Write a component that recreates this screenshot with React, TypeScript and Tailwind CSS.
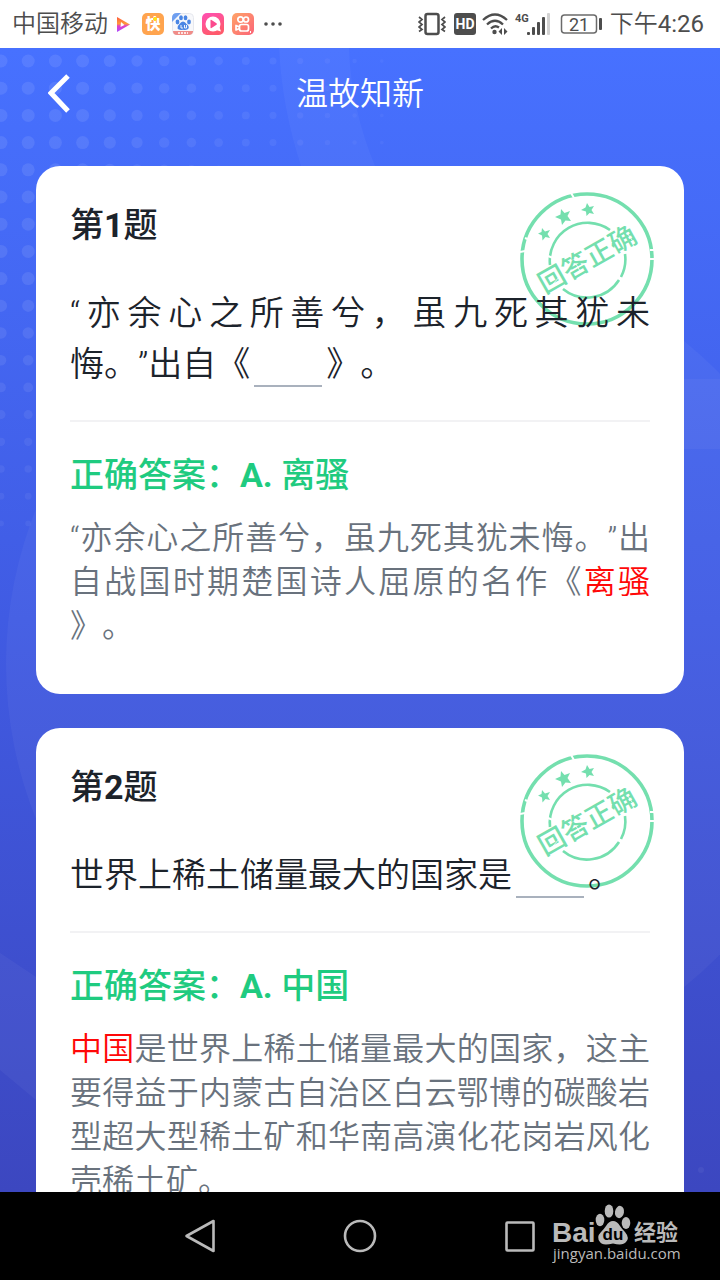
import React from "react";

interface Question {
    id: number;
    question: React.ReactNode;
    answer: string;
    explanation: React.ReactNode;
}

const Blank = () => <span className="inline-block w-17 h-10 mx-1 border-b-2 border-[#a9b1bd] align-middle" />;

const Mark = ({ children }: { children: React.ReactNode }) => <span className="text-[#ff0808]">{children}</span>;

const QUESTIONS: Question[] = [
    {
        id: 1,
        question: (
            <>
                “亦余心之所善兮，虽九死其犹未
                <wbr />
                <span className="whitespace-nowrap">悔。”出自《</span>
                <Blank />
                》。
            </>
        ),
        answer: "A. 离骚",
        explanation: (
            <>
                “亦余心之所善兮，虽九死其犹未悔。”出自战国时期楚国诗人屈原的名作《<Mark>离骚</Mark>
                <wbr />
                》。
            </>
        ),
    },
    {
        id: 2,
        question: (
            <>
                世界上稀土储量最大的国家是
                <Blank />
                。
            </>
        ),
        answer: "A. 中国",
        explanation: (
            <>
                <Mark>中国</Mark>是世界上稀土储量最大的国家，这主要得益于内蒙古自治区白云鄂博的碳酸岩型超大型稀土矿和华南高演化花岗岩风化壳稀土矿。
            </>
        ),
    },
];

// Halftone dots that shrink and fade away from the top left corner
const DOTS = Array.from({ length: 18 }, (_, row) =>
    Array.from({ length: 15 }, (_, col) => {
        const fade = Math.max(0, 1 - Math.max(0, col - 3) / 13 - Math.max(0, row - 8) / 14);
        return { x: 1 + col * 27.2, y: 13 + row * 27.2, r: 1 + 5.5 * fade, o: 0.03 + 0.06 * fade };
    })
)
    .flat()
    .filter((d) => d.r > 1);

function Backdrop() {
    return (
        <svg
            className="absolute inset-0 w-full h-full pointer-events-none"
            viewBox="0 0 720 1144"
            preserveAspectRatio="xMidYMin slice"
            aria-hidden="true"
        >
            {DOTS.map((d, i) => (
                <circle key={i} cx={d.x} cy={d.y} r={d.r} fill="#fff" opacity={d.o} />
            ))}
            <g fill="#fff">
                <path d="M279 0 Q282 60 301 118 L375 118 Q351 60 349 0 Z" opacity="0.035" />
                <circle cx="422" cy="616" r="416" opacity="0.04" />
                <path d="M600 331 H720 V401 H600 Z" opacity="0.04" />
                <path d="M0 905 L36 929 L120 970 V1100 L36 1052 L0 1022 Z" opacity="0.04" />
                <circle cx="701" cy="1122" r="3" opacity="0.05" />
            </g>
        </svg>
    );
}

function Stamp() {
    return (
        <svg className="absolute top-6.5 right-7.5 size-[134px]" viewBox="0 0 134 134" role="img" aria-label="回答正确">
            <g fill="none" stroke="#74dfae">
                <circle cx="67" cy="67" r="65" strokeWidth="3.6" />
                <path d="M30 73 A38 38 0 0 1 90 38" strokeWidth="2.6" />
                <path d="M43 97 A38 38 0 0 0 99 88 M101 85 A38 38 0 0 0 105 62" strokeWidth="2.6" />
            </g>
            <g stroke="#fff" strokeWidth="2">
                <path d="M51 1 L54 6 M5 46 L10 48 M0 60 L5 59 M130 58 L134 58 M130 67 L134 67 M28 64 L33 66" />
            </g>
            <g fill="#74dfae">
                <path d="M41 17 L44.500 21 L50 19 L47.500 24 L51 29 L45.500 28.500 L42 33 L41 27.500 L35 25 L40.500 22.500 Z" />
                <path d="M67 11 L69.500 15 L74 14 L71.500 18 L74 22 L69.500 21 L66.500 24 L66 19.500 L61 18 L65.500 15.500 Z" />
                <path d="M22 36 L25 39.500 L30 38 L27.500 42 L30 46 L25.500 45 L22.500 48.500 L22 43.500 L18 41.500 L21.500 40 Z" />
                <text
                    x="67"
                    y="77"
                    textAnchor="middle"
                    transform="rotate(-29.500 67 67)"
                    fontSize="27"
                    fontWeight="500"
                    fontFamily="'Noto Sans CJK SC', sans-serif"
                >
                    回答正确
                </text>
            </g>
            <path d="M33 92 L40 84 M56 72 L60 79 M88 55 L92 50 M108 42 L112 48" stroke="#fff" strokeWidth="0.8" />
        </svg>
    );
}

function QuestionCard({ item }: { item: Question }) {
    return (
        <article className="relative bg-white rounded-3xl px-8.5 pt-8.5 pb-11.5">
            <Stamp />
            <div className="relative">
                <h2 className="text-[34px] leading-[50px] font-medium text-[#1c232b]">
                    第<b className="font-bold">{item.id}</b>题
                </h2>
                <p className="mt-9.5 text-[34px] leading-[51px] font-[350] text-justify text-[#1c232b]">{item.question}</p>
                <hr className="mt-7.5 border-t-2 border-[#f2f2f4]" />
                <p className="mt-7 text-[34px] leading-[50px] font-medium text-[#1fcb80]">
                    正确答案：<b className="font-bold">{item.answer.slice(0, 2)}</b>
                    {item.answer.slice(2)}
                </p>
                <p className="mt-4 text-[32px] leading-[44px] font-[350] text-justify text-[#69727d]">{item.explanation}</p>
            </div>
        </article>
    );
}

function StatusBar() {
    return (
        <header className="h-12 shrink-0 bg-white text-[#4d4d4d] text-[24px] flex items-center justify-between pl-3 pr-4">
            <div className="flex items-center gap-2">
                <span className="-mr-1 font-[350]">中国移动</span>
                <svg className="size-5.5" viewBox="0 0 22 22">
                    <defs>
                        <linearGradient id="play" x1="0" y1="0" x2="0" y2="1">
                            <stop offset="0" stopColor="#ff5a3c" />
                            <stop offset="0.45" stopColor="#ff9c3a" />
                            <stop offset="0.6" stopColor="#e040c8" />
                            <stop offset="1" stopColor="#a94bff" />
                        </linearGradient>
                    </defs>
                    <path d="M5 4 L18 11.500 L5 19 Z" fill="url(#play)" />
                    <path d="M9 9 L12.500 12 L8.500 14 Z" fill="#fff" />
                </svg>
                <svg className="size-5.5" viewBox="0 0 22 22">
                    <rect width="22" height="22" rx="5" fill="#ffa44e" />
                    <text x="11" y="16" textAnchor="middle" fontSize="15" fontWeight="900" fill="#fff" fontFamily="'Noto Sans CJK SC', sans-serif">
                        快
                    </text>
                    <path d="M13 4 V8 M11 6 H15" stroke="#ffe21a" strokeWidth="2" />
                </svg>
                <svg className="size-5.5" viewBox="0 0 22 22">
                    <rect x="0.5" y="0.5" width="21" height="21" rx="4" fill="#f7f8fb" stroke="#e6e8ee" />
                    <path d="M0 9 V5 Q0 0 5 0 H9 Z" fill="#6f9ff0" />
                    <g fill="#4a86e4">
                        <ellipse cx="5.500" cy="9" rx="1.900" ry="2.400" />
                        <ellipse cx="9" cy="4.800" rx="1.900" ry="2.500" />
                        <ellipse cx="13.500" cy="4.800" rx="1.900" ry="2.500" />
                        <ellipse cx="17" cy="9" rx="1.900" ry="2.400" />
                        <path d="M11 8.500 Q13 8.500 14.500 11 Q17.500 13 16.500 15.500 Q15.500 17.500 11 16.800 Q6.500 17.500 5.500 15.500 Q5 13 7.500 11 Q9 8.500 11 8.500 Z" />
                    </g>
                    <path d="M9 12 V15 H11 M12.500 12 V15 H14.500 V12" stroke="#fff" fill="none" strokeWidth="0.9" />
                    <path d="M1 18 H21 V19 Q20 22 17 22 H5 Q1 22 1 18 Z" fill="#f08c88" />
                    <path d="M6 20 H16" stroke="#fff" strokeWidth="1.500" strokeDasharray="2 1" />
                </svg>
                <svg className="size-5.5" viewBox="0 0 22 22">
                    <defs>
                        <linearGradient id="pink" x1="0" y1="0" x2="0.4" y2="1">
                            <stop offset="0" stopColor="#ff4fb4" />
                            <stop offset="1" stopColor="#ff5a6c" />
                        </linearGradient>
                    </defs>
                    <rect width="22" height="22" rx="5" fill="url(#pink)" />
                    <circle cx="11" cy="11" r="7.500" fill="#fff" />
                    <path d="M14 17 L19 18.500 L17 13 Z" fill="#fff" />
                    <path d="M8.500 7.500 Q8.500 6.500 9.500 7 L14.500 10.200 Q15.300 11 14.500 11.800 L9.500 15 Q8.500 15.500 8.500 14.500 Z" fill="#fb4a8d" />
                </svg>
                <svg className="size-5.5" viewBox="0 0 22 22">
                    <defs>
                        <linearGradient id="kuai" x1="0" y1="0" x2="1" y2="1">
                            <stop offset="0" stopColor="#ffa468" />
                            <stop offset="1" stopColor="#fb6478" />
                        </linearGradient>
                    </defs>
                    <rect width="22" height="22" rx="5" fill="url(#kuai)" />
                    <g fill="none" stroke="#fff" strokeWidth="1.700">
                        <circle cx="8.500" cy="6.500" r="2.700" />
                        <circle cx="14" cy="6.500" r="2.500" />
                        <rect x="7.500" y="11.500" width="9" height="6.500" rx="2" />
                        <path d="M7.500 14 L4 12.500 V17 L7.500 15.500" strokeLinejoin="round" />
                    </g>
                    <path d="M18.500 18 V20" stroke="#fff" />
                </svg>
                <svg className="w-7 h-5.5" viewBox="0 0 28 22" fill="#4d4d4d">
                    <circle cx="4" cy="11" r="1.800" />
                    <circle cx="11" cy="11" r="1.800" />
                    <circle cx="18" cy="11" r="1.800" />
                </svg>
            </div>
            <div className="flex items-center gap-1.5">
                <svg className="w-7 h-6 mr-0.5" viewBox="0 0 28 24" fill="none" stroke="#4d4d4d">
                    <rect x="7.500" y="2" width="13" height="20" rx="2" strokeWidth="2.500" />
                    <path d="M1 5 L4 7.500 L1 10 L4 12.500 L1 15 L4 17.500 L1 19.500 M27 5 L24 7.500 L27 10 L24 12.500 L27 15 L24 17.500 L27 19.500" strokeWidth="1.700" />
                </svg>
                <svg className="size-5.5" viewBox="0 0 22 22">
                    <rect width="22" height="22" rx="3" fill="#4d4d4d" />
                    <text x="11" y="16" textAnchor="middle" fontSize="14" fontWeight="700" fill="#fff" fontFamily="Roboto, sans-serif">
                        HD
                    </text>
                </svg>
                <svg className="w-6.5 h-6" viewBox="0 0 26 24" fill="none" stroke="#4d4d4d">
                    <path d="M1 8 Q13 -3 25 8 M5 12.500 Q13 5 21 12.500 M9 16.500 Q13 12.500 17 15.500" strokeWidth="2.300" />
                    <circle cx="12.500" cy="20" r="2.200" fill="#4d4d4d" stroke="none" />
                    <path d="M20 16 V23 L16.500 19.500 Z M22 16 V23 L25.500 19.500 Z" fill="#4d4d4d" stroke="none" />
                </svg>
                <svg className="w-9 h-6" viewBox="0 0 36 24" fill="#4d4d4d">
                    <text x="1" y="10" fontSize="11" fontWeight="700" fontFamily="Roboto, sans-serif">
                        4G
                    </text>
                    <rect x="13" y="20" width="3" height="3" rx="1" />
                    <rect x="18" y="15" width="3" height="8" rx="1" />
                    <rect x="23" y="10" width="3" height="13" rx="1" />
                    <rect x="28" y="5" width="3" height="18" rx="1" />
                    <rect x="33" y="1" width="3" height="22" rx="1" fill="#d2d2d2" />
                </svg>
                <svg className="w-11 h-5 ml-1" viewBox="0 0 44 20">
                    <rect x="1.500" y="1" width="35" height="18" rx="3" fill="none" stroke="#6b6b6b" strokeWidth="1.500" />
                    <rect x="39" y="4" width="3" height="12" rx="1" fill="#4d4d4d" />
                    <text x="19" y="16.500" textAnchor="middle" fontSize="18" fill="#4d4d4d" fontFamily="Roboto, sans-serif">
                        21
                    </text>
                </svg>
                <time className="font-[350]">
                    下午<span className="font-normal">4:26</span>
                </time>
            </div>
        </header>
    );
}

function Watermark() {
    return (
        <svg className="absolute right-9.5 top-2.5 w-[130px] h-16" viewBox="0 0 130 64" fill="#bababa" role="img" aria-label="Baidu 经验">
            <text x="0" y="40" fontSize="28" fontWeight="700" fontFamily="'Liberation Sans', sans-serif">
                Bai
            </text>
            <ellipse cx="48" cy="18" rx="4.300" ry="6.200" />
            <ellipse cx="57" cy="9" rx="4.300" ry="6.600" />
            <ellipse cx="67.500" cy="10" rx="4.500" ry="6.200" transform="rotate(10 67.500 10)" />
            <ellipse cx="74" cy="21" rx="4.300" ry="6" />
            <path d="M61 19 Q65 19 68 24 Q70 27 73 30 Q78 36 74 40 Q71 44 61 41.500 Q50 44 48 40 Q44 35 49 30 Q52 27 54 24 Q57 19 61 19 Z" />
            <text x="61" y="38" textAnchor="middle" fontSize="17" fontWeight="700" fill="#000" fontFamily="'Liberation Sans', sans-serif">
                du
            </text>
            <text x="82" y="38" fontSize="22" fontWeight="700" fontFamily="'Noto Sans CJK SC', sans-serif">
                经验
            </text>
            <text x="1" y="57" fontSize="15" fontFamily="'Open Sans', sans-serif">
                jingyan.baidu.com
            </text>
        </svg>
    );
}

function SystemNav() {
    return (
        <nav className="relative h-22 shrink-0 bg-black flex justify-center">
            <button className="w-2/9 flex items-center justify-center" aria-label="返回">
                <svg className="size-9" viewBox="0 0 36 36" fill="none" stroke="#bababa" strokeWidth="2.600" strokeLinejoin="round">
                    <path d="M31.500 3 V33 L4.500 18 Z" />
                </svg>
            </button>
            <button className="w-2/9 flex items-center justify-center" aria-label="主页">
                <svg className="size-9" viewBox="0 0 36 36" fill="none" stroke="#bababa" strokeWidth="2.600">
                    <circle cx="18" cy="18" r="15" />
                </svg>
            </button>
            <button className="w-2/9 flex items-center justify-center" aria-label="最近任务">
                <svg className="size-9" viewBox="0 0 36 36" fill="none" stroke="#bababa" strokeWidth="2.600">
                    <rect x="4.500" y="4.500" width="27" height="28" rx="1" />
                </svg>
            </button>
            <Watermark />
        </nav>
    );
}

export default function App() {
    return (
        <div
            className="h-screen flex flex-col font-[Roboto,'Noto_Sans_CJK_SC',sans-serif] [text-spacing-trim:space-all]"
            lang="zh-CN"
        >
            <StatusBar />
            <main className="relative flex-1 min-h-0 overflow-y-auto [scrollbar-width:none] bg-linear-to-b from-[#4771ff] via-[#405be3] to-[#3c47c0]">
                <Backdrop />
                <div className="relative">
                    <div className="grid grid-cols-[72px_1fr_72px] items-center h-29.5 pb-6.5">
                        <button className="h-12 flex items-center justify-end" aria-label="返回">
                            <svg className="w-6 h-10" viewBox="0 0 24 40" fill="none" stroke="#fff" strokeWidth="5">
                                <path d="M20 2 L3 19 L20 37" />
                            </svg>
                        </button>
                        <h1 className="text-center text-white text-[32px] font-[350]">温故知新</h1>
                    </div>
                    <div className="flex flex-col gap-8.5 px-9 pb-9">
                        {QUESTIONS.map((item) => (
                            <QuestionCard key={item.id} item={item} />
                        ))}
                    </div>
                </div>
            </main>
            <SystemNav />
        </div>
    );
}
